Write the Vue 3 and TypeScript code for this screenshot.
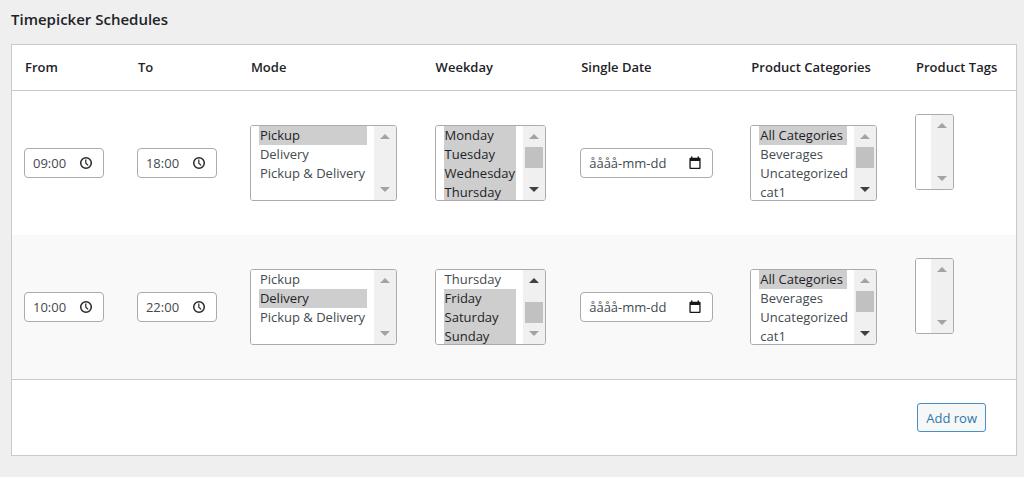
<script setup lang="ts">
import { nextTick, onMounted, ref } from 'vue'

interface ListField {
  key: string
  label: string
  options: string[]
  selected: string[]
  scroll: number
  thumb: number | null
  up: boolean
  down: boolean
}

interface Schedule {
  id: number
  from: string
  to: string
  date: string
  mode: ListField
  weekday: ListField
  categories: ListField
  tags: ListField
}

const modes = ['Pickup', 'Delivery', 'Pickup & Delivery']
const days = ['Monday', 'Tuesday', 'Wednesday', 'Thursday', 'Friday', 'Saturday', 'Sunday']
const categories = ['All Categories', 'Beverages', 'Uncategorized', 'cat1']

function list(key: string, label: string, options: string[], selected: string[], extra: Partial<ListField> = {}): ListField {
  return { key, label, options, selected, scroll: 0, thumb: null, up: false, down: false, ...extra }
}

function schedule(id: number, from: string, to: string, mode: string, weekday: ListField): Schedule {
  return {
    id,
    from,
    to,
    date: '',
    mode: list('mode', 'Mode', modes, [mode]),
    weekday,
    categories: list('categories', 'Product Categories', categories, ['All Categories'], { thumb: 21, down: true }),
    tags: list('tags', 'Product Tags', [], []),
  }
}

const rows = ref<Schedule[]>([
  schedule(1, '09:00', '18:00', 'Pickup', list('weekday', 'Weekday', days, days.slice(0, 4), { thumb: 21, down: true })),
  schedule(2, '10:00', '22:00', 'Delivery', list('weekday', 'Weekday', days, days.slice(4), { thumb: 32, up: true, scroll: 57 })),
])

const headings = ['From', 'To', 'Mode', 'Weekday', 'Single Date', 'Product Categories', 'Product Tags']
const times = ['from', 'to'] as const
const lists = (row: Schedule) => [row.mode, row.weekday]

function addRow() {
  rows.value.push(schedule(rows.value.length + 1, '', '', '', list('weekday', 'Weekday', days, [], { thumb: 21, down: true })))
}

const table = ref<HTMLTableElement | null>(null)

onMounted(async () => {
  await nextTick()
  requestAnimationFrame(() => {
    table.value?.querySelectorAll<HTMLSelectElement>('select').forEach((el) => {
      el.scrollTop = Number(el.dataset.scroll)
    })
  })
})
</script>

<template>
  <main class="page">
    <h2 class="title">Timepicker Schedules</h2>
    <table ref="table" class="schedules">
      <colgroup>
        <col v-for="h in headings" :key="h" :class="'col-' + h.toLowerCase().replace(' ', '-')" />
      </colgroup>
      <thead>
        <tr>
          <th v-for="h in headings" :key="h" scope="col">{{ h }}</th>
        </tr>
      </thead>
      <tbody>
        <tr v-for="row in rows" :key="row.id">
          <td v-for="t in times" :key="t">
            <div class="field time">
              <input v-model="row[t]" type="text" inputmode="numeric" :aria-label="t === 'from' ? 'From' : 'To'" />
              <button type="button" class="picker" aria-label="Choose time">
                <svg width="14" height="14" viewBox="0 0 14 14" fill="none" stroke="#24272b" stroke-width="1.5">
                  <circle cx="7" cy="7" r="5.3" />
                  <path d="M6.8 3.6V7.2L9.2 9.4" stroke-width="1.2" />
                </svg>
              </button>
            </div>
          </td>
          <td v-for="f in lists(row)" :key="f.key">
            <div class="listbox" :class="f.key">
              <select v-model="f.selected" multiple size="4" :aria-label="f.label" :data-scroll="f.scroll">
                <option v-for="o in f.options" :key="o">{{ o }}</option>
              </select>
              <svg class="bar" width="22" height="74" viewBox="0 0 22 74" aria-hidden="true">
                <path d="M6 13L11 8L16 13Z" :fill="f.up ? '#404040' : '#a3a3a3'" />
                <rect v-if="f.thumb !== null" x="2" :y="f.thumb" width="18" height="21" fill="#c1c1c1" />
                <path d="M6 61H16L11 66Z" :fill="f.down ? '#404040' : '#a3a3a3'" />
              </svg>
            </div>
          </td>
          <td>
            <div class="field date">
              <input v-model="row.date" type="text" placeholder="åååå-mm-dd" aria-label="Single Date" />
              <button type="button" class="picker" aria-label="Choose date">
                <svg width="14" height="14" viewBox="0 0 14 14" fill="#15171a">
                  <path fill-rule="evenodd" d="M3 0.6H4.4V1.8H9.6V0.6H11V1.8H11.6Q12.6 1.8 12.6 2.8V12Q12.6 13 11.6 13H2.4Q1.4 13 1.4 12V2.8Q1.4 1.8 2.4 1.8H3ZM2.7 5V11.7H11.3V5Z" />
                </svg>
              </button>
            </div>
          </td>
          <td v-for="f in [row.categories, row.tags]" :key="f.key" :class="{ 'tags-cell': f.key === 'tags' }">
            <div class="listbox" :class="f.key">
              <select v-model="f.selected" multiple size="4" :aria-label="f.label" :data-scroll="f.scroll">
                <option v-for="o in f.options" :key="o">{{ o }}</option>
              </select>
              <svg class="bar" width="22" height="74" viewBox="0 0 22 74" aria-hidden="true">
                <path d="M6 13L11 8L16 13Z" :fill="f.up ? '#404040' : '#a3a3a3'" />
                <rect v-if="f.thumb !== null" x="2" :y="f.thumb" width="18" height="21" fill="#c1c1c1" />
                <path d="M6 61H16L11 66Z" :fill="f.down ? '#404040' : '#a3a3a3'" />
              </svg>
            </div>
          </td>
        </tr>
      </tbody>
      <tfoot>
        <tr>
          <td :colspan="headings.length">
            <button type="button" class="add" @click="addRow">Add row</button>
          </td>
        </tr>
      </tfoot>
    </table>
  </main>
</template>

<style>
html {
  background: #efefef;
}
</style>

<style scoped>
.page {
  padding: 7px 7px 21px 11px;
  font-family: 'Open Sans', 'Noto Sans', sans-serif;
  font-size: 13px;
  color: #1d2327;
}
.title {
  margin: 0 0 13px;
  font-size: 15px;
  line-height: 24px;
  font-weight: 600;
}
.schedules {
  width: 100%;
  table-layout: fixed;
  border-collapse: separate;
  border-spacing: 0;
  background: #fff;
  border: 1px solid #c9cacc;
}
.col-from { width: 11.25%; }
.col-to { width: 11.25%; }
.col-mode { width: 18.4%; }
.col-weekday { width: 14.5%; }
.col-single-date { width: 16.95%; }
.col-product-categories { width: 16.4%; }
.col-product-tags { width: 11.25%; }
th {
  padding: 12px 0 13px 13px;
  line-height: 20px;
  font-weight: 600;
  text-align: left;
  white-space: nowrap;
  border-bottom: 1px solid #c9cacc;
}
tbody td {
  height: 76px;
  padding: 34px 0 34px 12px;
  vertical-align: middle;
}
tbody .tags-cell {
  padding-top: 23px;
  vertical-align: top;
}
tbody tr:nth-child(even) {
  background: #f9f9f9;
}
.field,
.listbox {
  display: flex;
  box-sizing: border-box;
  background: #fff;
  border: 1px solid #a9abae;
  border-radius: 4px;
  overflow: hidden;
}
.field {
  height: 30px;
  align-items: center;
  padding: 0 10px 0 8px;
}
.time { width: 80px; }
.date { width: 133px; }
.mode { width: 147px; }
.weekday { width: 111px; }
.categories { width: 127px; }
.tags { width: 39px; }
input,
select,
button {
  font: inherit;
}
input {
  flex: 1;
  min-width: 0;
  padding: 0;
  border: 0;
  background: none;
  color: #444a50;
  line-height: 20px;
}
input::placeholder {
  color: #444a50;
  opacity: 1;
}
.picker {
  display: flex;
  padding: 0;
  border: 0;
  background: none;
}
.listbox {
  height: 76px;
  border-radius: 3px;
}
select {
  flex: 1;
  min-width: 0;
  height: 74px;
  margin: 0;
  padding: 0 7px 0 8px;
  border: 0;
  border-radius: 0;
  outline: 0;
  background: #fff;
  color: #444a50;
  overflow-y: scroll;
  scrollbar-width: none;
}
option {
  min-height: 18px;
  line-height: 18px;
  padding: 0 0 1px 1px;
}
option:checked {
  background: #cecece;
  color: #1d2327;
}
.bar {
  flex: none;
  background: #f0f0f0;
}
tfoot td {
  padding: 23px 30px;
  text-align: right;
  border-top: 1px solid #c9cacc;
}
.add {
  height: 29px;
  padding: 0 8px;
  border: 1px solid #4a8fc4;
  border-radius: 3px;
  background: #f6f7f7;
  color: #2f76ae;
  cursor: pointer;
}
</style>
